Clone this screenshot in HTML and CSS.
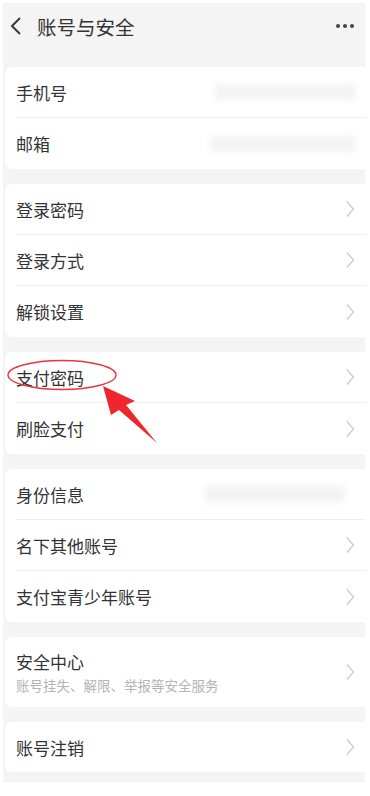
FILE: index.html
```html
<!DOCTYPE html>
<html lang="zh">
<head>
<meta charset="utf-8">
<link rel="stylesheet" href="styles.css">
</head>
<body>
<div class="screen">
  <header class="topbar">
    <svg class="back" width="14" height="20" viewBox="0 0 14 20"><path d="M11 2 L3 10 L11 18" fill="none" stroke="#3a3a3a" stroke-width="2"/></svg>
    <span class="title">账号与安全</span>
    <span class="more"><i></i><i></i><i></i></span>
  </header>
  <main class="list">
    <section class="card">
      <div class="row"><span class="label">手机号</span><span class="blur wide"></span></div>
      <div class="row"><span class="label">邮箱</span><span class="blur wider"></span></div>
    </section>
    <section class="card">
      <div class="row"><span class="label">登录密码</span><svg class="chev" width="9" height="18" viewBox="0 0 9 18"><path d="M1 1.5 L7.5 9 L1 16.5" fill="none" stroke="#cccccc" stroke-width="1.3"/></svg></div>
      <div class="row"><span class="label">登录方式</span><svg class="chev" width="9" height="18" viewBox="0 0 9 18"><path d="M1 1.5 L7.5 9 L1 16.5" fill="none" stroke="#cccccc" stroke-width="1.3"/></svg></div>
      <div class="row"><span class="label">解锁设置</span><svg class="chev" width="9" height="18" viewBox="0 0 9 18"><path d="M1 1.5 L7.5 9 L1 16.5" fill="none" stroke="#cccccc" stroke-width="1.3"/></svg></div>
    </section>
    <section class="card">
      <div class="row"><span class="label">支付密码</span><svg class="chev" width="9" height="18" viewBox="0 0 9 18"><path d="M1 1.5 L7.5 9 L1 16.5" fill="none" stroke="#cccccc" stroke-width="1.3"/></svg></div>
      <div class="row"><span class="label">刷脸支付</span><svg class="chev" width="9" height="18" viewBox="0 0 9 18"><path d="M1 1.5 L7.5 9 L1 16.5" fill="none" stroke="#cccccc" stroke-width="1.3"/></svg></div>
    </section>
    <section class="card">
      <div class="row"><span class="label">身份信息</span><span class="blur id"></span></div>
      <div class="row"><span class="label">名下其他账号</span><svg class="chev" width="9" height="18" viewBox="0 0 9 18"><path d="M1 1.5 L7.5 9 L1 16.5" fill="none" stroke="#cccccc" stroke-width="1.3"/></svg></div>
      <div class="row"><span class="label">支付宝青少年账号</span><svg class="chev" width="9" height="18" viewBox="0 0 9 18"><path d="M1 1.5 L7.5 9 L1 16.5" fill="none" stroke="#cccccc" stroke-width="1.3"/></svg></div>
    </section>
    <section class="card">
      <div class="row tall"><span class="stack"><span class="label">安全中心</span><span class="sub">账号挂失、解限、举报等安全服务</span></span><svg class="chev" width="9" height="18" viewBox="0 0 9 18"><path d="M1 1.5 L7.5 9 L1 16.5" fill="none" stroke="#cccccc" stroke-width="1.3"/></svg></div>
    </section>
    <section class="card">
      <div class="row short"><span class="label">账号注销</span><svg class="chev" width="9" height="18" viewBox="0 0 9 18"><path d="M1 1.5 L7.5 9 L1 16.5" fill="none" stroke="#cccccc" stroke-width="1.3"/></svg></div>
    </section>
    <section class="card stub"></section>
  </main>
  <svg class="mark" width="370" height="460" viewBox="0 0 370 460">
    <ellipse cx="62" cy="375" rx="54" ry="14.5" fill="none" stroke="#e8353b" stroke-width="1.4"/>
    <polygon points="103,386 135,401 126,405 157,443 119,410 111,415" fill="#f0262e"/>
  </svg>
</div>
</body>
</html>
```
FILE: styles.css
```css
html, body {
  margin: 0;
  padding: 0;
  background: #ffffff;
}
body {
  width: 370px;
  height: 796px;
  overflow: hidden;
  font-family: "Noto Sans CJK SC", "Noto Sans", sans-serif;
  color: #333333;
  position: relative;
}
.screen {
  margin: 3px 5px 0 3px;
  background: #f4f4f4;
  height: 779px;
  overflow: hidden;
}
.topbar {
  height: 46px;
  display: flex;
  align-items: center;
  padding-left: 6px;
  padding-right: 8px;
}
.back {
  display: block;
}
.title {
  margin-left: 14px;
  font-size: 19.5px;
  color: #333;
}
.more {
  margin-left: auto;
  display: flex;
  gap: 3px;
  padding-right: 3px;
}
.more i {
  width: 4px;
  height: 4px;
  border-radius: 50%;
  background: #444;
}
.list {
  padding-top: 18px;
  display: flex;
  flex-direction: column;
  gap: 15px;
  margin-left: 2px;
  margin-right: -5px;
}
.card {
  background: #ffffff;
  border-radius: 7px;
  padding-left: 11px;
}
.row {
  height: 51px;
  display: flex;
  align-items: center;
  padding-right: 15px;
  border-bottom: 1px solid #eeeeee;
  box-sizing: border-box;
}
.row:last-child {
  border-bottom: none;
}
.row.tall {
  height: 70px;
}
.row.short {
  height: 50px;
}
.label {
  font-size: 17px;
  color: #333333;
}
.stack {
  display: flex;
  flex-direction: column;
  gap: 1px;
}
.sub {
  font-size: 13.5px;
  color: #b4b4b4;
}
.chev {
  margin-left: auto;
  display: block;
}
.blur {
  margin-left: auto;
  height: 16px;
  background: #f3f3f3;
  filter: blur(3px);
}
.blur.wide { width: 140px; }
.blur.wider { width: 145px; }
.blur.id { width: 140px; margin-right: 10px; }
.stub {
  height: 40px;
}
.mark {
  position: absolute;
  left: 0;
  top: 0;
  height: 460px;
  pointer-events: none;
}
```
